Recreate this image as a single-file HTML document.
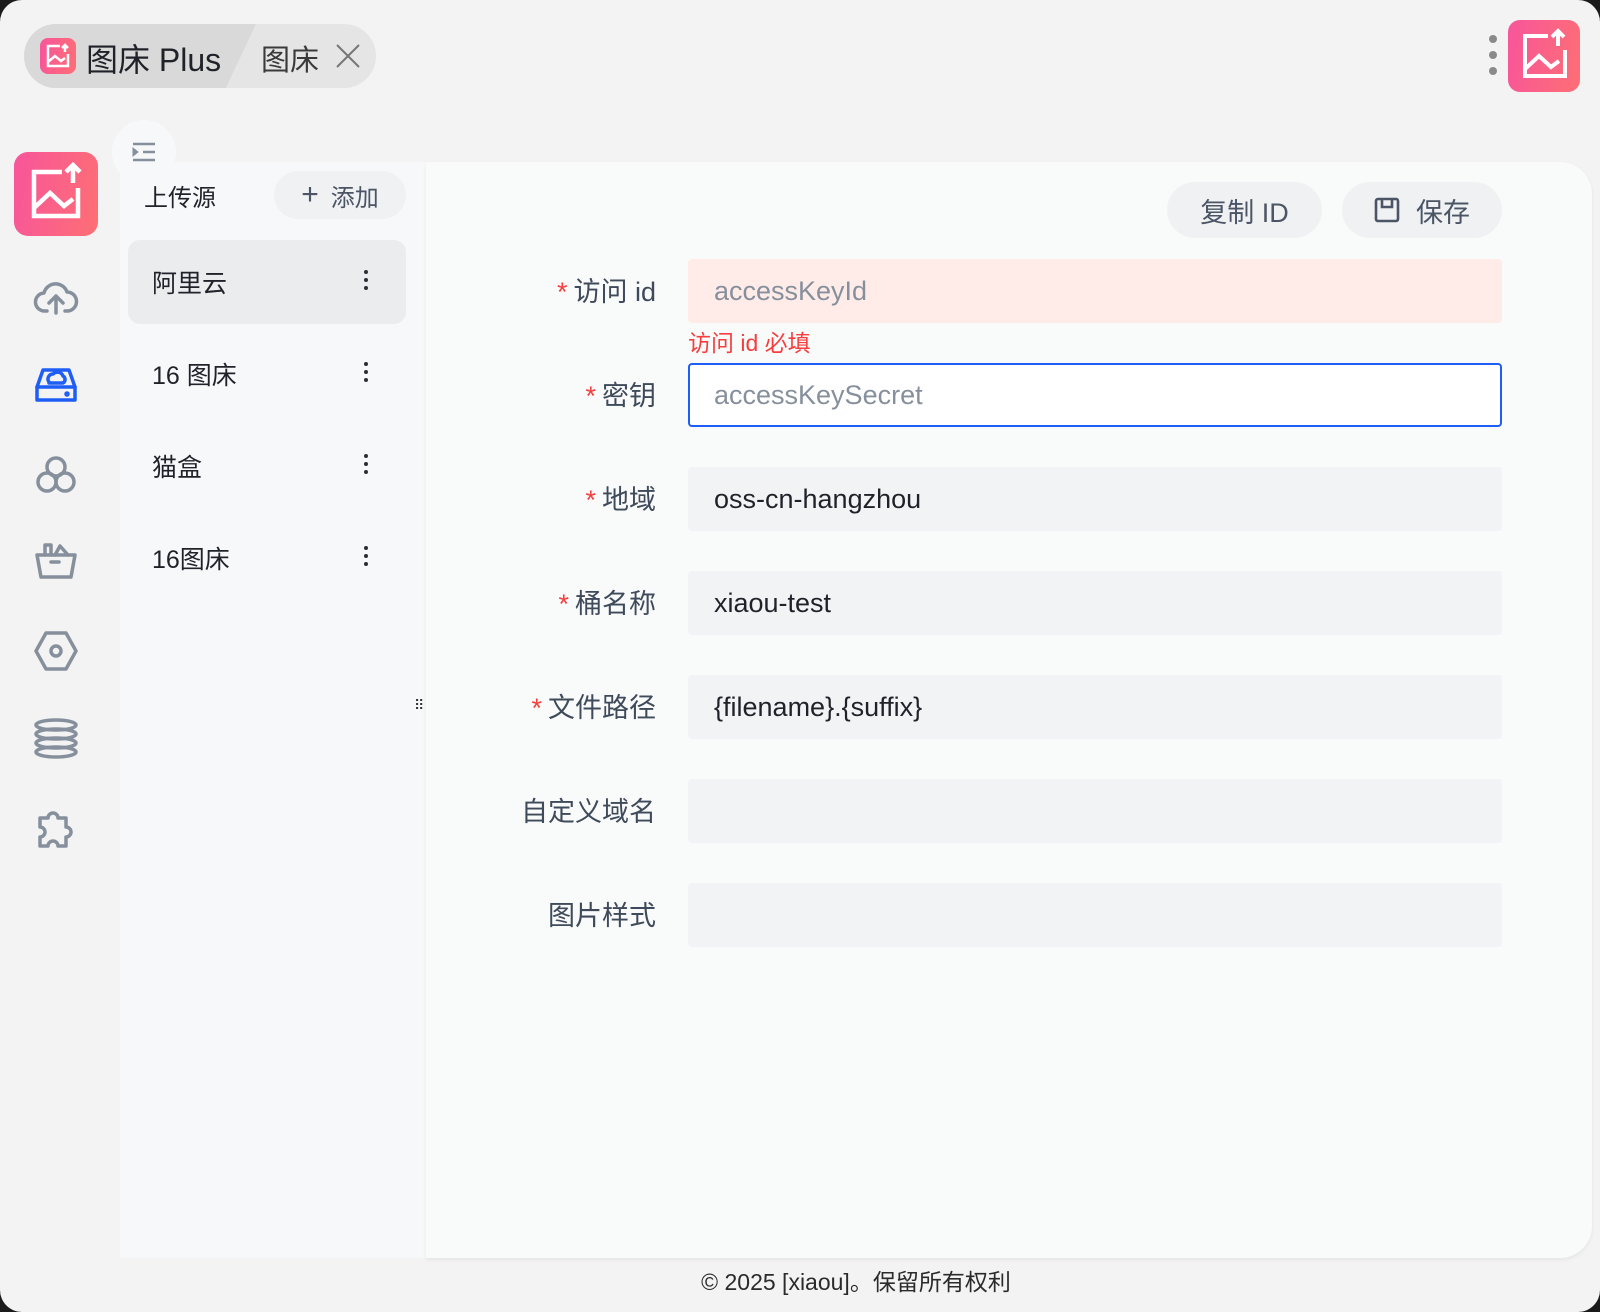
<!DOCTYPE html>
<html><head><meta charset="utf-8"><style>
*{box-sizing:border-box;margin:0;padding:0}
html,body{width:1600px;height:1312px;background:#1b1b1b;overflow:hidden}
body{font-family:"Liberation Sans","Noto Sans CJK SC",sans-serif;color:#1f2329}
.win{position:absolute;left:0;top:0;width:1600px;height:1312px;background:#f3f3f3;border-radius:22px;overflow:hidden}
.abs{position:absolute}
.tabs{left:24px;top:24px;width:352px;height:64px;border-radius:32px;background:#e5e5e5;overflow:hidden}
.tab1{left:0;top:0;width:232px;height:64px;background:#d9d9d9;clip-path:polygon(0 0,100% 0,87% 100%,0 100%)}
.logo{background:linear-gradient(100deg,#f7559b,#fe6f74);border-radius:8px}
.side{left:120px;top:162px;width:306px;height:1096px;background:#f7f8fa}
.card{left:426px;top:162px;width:1166px;height:1096px;background:#f9fafa;border-radius:0 32px 32px 0;box-shadow:0 2px 4px rgba(0,0,0,.06)}
.btn{height:56px;border-radius:28px;background:#eff1f3;color:#4b5565;font-size:27px;display:flex;align-items:center;justify-content:center}
.lbl{width:260px;text-align:right;font-size:27px;color:#3f4a5a;left:396px}
.lbl b{color:#f53f3f;font-weight:normal;margin-right:6px}
.inp{left:688px;width:814px;height:64px;border-radius:4px;background:#f2f3f5;font-size:27px;padding-left:26px;display:flex;align-items:center;color:#1f2329}
.item{left:128px;width:278px;height:84px;border-radius:12px;font-size:25px;padding-left:24px;display:flex;align-items:center;color:#1f2329}
.dots{position:absolute;right:38px;top:30px;width:4px}
.dots i{display:block;width:4px;height:4px;border-radius:2px;background:#2b2f36;margin-bottom:4px}
.nav svg{position:absolute;left:33px;width:46px;height:46px;fill:none;stroke:#86909c;stroke-width:3.5;stroke-linecap:round;stroke-linejoin:round}
</style></head><body><div class="win">
<div class="abs tabs"><div class="abs tab1"></div>
 <div class="abs logo" style="left:16px;top:14px;width:36px;height:36px"><svg width="36" height="36" viewBox="0 0 36 36" fill="none" stroke="#fff" stroke-width="2.5"><path d="M20 8H8v20h20V16"/><path d="M8 24l7-6 6 5 4-3"/><path d="M25 14V7M22 10l3-3 3 3"/></svg></div>
 <div class="abs" style="left:62px;top:11px;font-size:32px;color:#1f2329">图床 Plus</div>
 <div class="abs" style="left:237px;top:13px;font-size:29px;color:#3a3a3a">图床</div>
 <svg class="abs" style="left:310px;top:18px" width="28" height="28" viewBox="0 0 28 28" stroke="#777" stroke-width="2"><path d="M3 3l22 22M25 3L3 25"/></svg>
</div>
<div class="abs" style="left:1489px;top:35px;width:9px"><i style="display:block;width:8px;height:8px;border-radius:4px;background:#8a8a8a;margin-bottom:8px"></i><i style="display:block;width:8px;height:8px;border-radius:4px;background:#8a8a8a;margin-bottom:8px"></i><i style="display:block;width:8px;height:8px;border-radius:4px;background:#8a8a8a"></i></div>
<div class="abs logo" style="left:1508px;top:20px;width:72px;height:72px;border-radius:12px"><svg width="72" height="72" viewBox="0 0 72 72" fill="none" stroke="#fff" stroke-width="4"><path d="M40 16H17v40h40V30"/><path d="M17 49l14-13 12 11 8-6"/><path d="M50 26V11M44 17l6-6 6 6"/></svg></div>

<div class="abs side"></div>
<div class="abs card"></div>
<div class="abs logo" style="left:14px;top:152px;width:84px;height:84px;border-radius:14px"><svg width="84" height="84" viewBox="0 0 84 84" fill="none" stroke="#fff" stroke-width="4.5"><path d="M48 20H20v44h44V36"/><path d="M20 56l16-15 14 13 9-7"/><path d="M59 31V13M52 20l7-7 7 7"/></svg></div>
<div class="abs" style="left:112px;top:120px;width:64px;height:64px;border-radius:32px;background:#f7f8f9"></div>
<svg class="abs" style="left:132px;top:142px" width="24" height="20" viewBox="0 0 24 20" stroke="#86909c" stroke-width="2.4"><path d="M1 2h22M11 10h12M1 18h22"/><path d="M1 6l5 4-5 4z" fill="#86909c" stroke-width="1"/></svg>

<div class="nav">
<svg style="top:275px" viewBox="0 0 46 46"><path d="M14 36H12a9 9 0 0 1-1-18 12 12 0 0 1 23-1 9 9 0 0 1 0 19h-2"/><path d="M23 38V22M16 28l7-7 7 7"/></svg>
<svg style="top:362px;stroke:#1f5ef6" viewBox="0 0 46 46"><path d="M4 25l6-17h26l6 17v13H4z"/><path d="M4 25h38"/><path d="M16 20a5 5 0 0 1 4-8 6 6 0 0 1 10 2 4 4 0 0 1 0 7H16"/><circle cx="34" cy="32" r="1" fill="#1f5ef6"/></svg>
<svg style="top:452px" viewBox="0 0 46 46"><circle cx="23" cy="15" r="9"/><circle cx="14" cy="30" r="9"/><circle cx="32" cy="30" r="9"/></svg>
<svg style="top:540px" viewBox="0 0 46 46"><path d="M4 15h38l-4 22H8z"/><path d="M12 15V5h6v10M22 15l5-9 8 9"/><path d="M18 22h8"/></svg>
<svg style="top:628px" viewBox="0 0 46 46"><path d="M13 5h20l10 18-10 18H13L3 23z"/><circle cx="23" cy="23" r="5"/></svg>
<svg style="top:716px" viewBox="0 0 46 46"><ellipse cx="23" cy="9" rx="20" ry="5"/><ellipse cx="23" cy="18" rx="20" ry="5"/><ellipse cx="23" cy="27" rx="20" ry="5"/><ellipse cx="23" cy="36" rx="20" ry="5"/></svg>
<svg style="top:804px" viewBox="0 0 46 46"><path d="M7 14h8a5 5 0 1 1 10 0h8v9a5 5 0 1 1 0 10v9h-8a5 5 0 1 0-10 0H7v-9a5 5 0 1 0 0-10z"/></svg>
</div>

<div class="abs" style="left:144px;top:178px;font-size:24px;color:#1f2329">上传源</div>
<div class="abs btn" style="left:274px;top:171px;width:132px;height:48px;border-radius:24px;font-size:24px;background:#eff1f3"><span style="font-size:30px;margin-right:12px;font-weight:300">+</span>添加</div>
<div class="abs item" style="top:240px;background:#ebecee">阿里云<span class="dots"><i></i><i></i><i></i></span></div>
<div class="abs item" style="top:332px">16 图床<span class="dots"><i></i><i></i><i></i></span></div>
<div class="abs item" style="top:424px">猫盒<span class="dots"><i></i><i></i><i></i></span></div>
<div class="abs item" style="top:516px">16图床<span class="dots"><i></i><i></i><i></i></span></div>
<div class="abs" style="left:414px;top:702px;font-size:14px;color:#333;line-height:6px;letter-spacing:1px">⠿</div>

<div class="abs btn" style="left:1167px;top:182px;width:155px">复制 ID</div>
<div class="abs btn" style="left:1342px;top:182px;width:160px"><svg width="26" height="26" viewBox="0 0 26 26" fill="none" stroke="#4b5565" stroke-width="2.6" style="margin-right:16px"><rect x="2" y="2" width="22" height="22" rx="2"/><path d="M8 2v8h10V2"/></svg>保存</div>

<div class="abs lbl" style="top:270px"><b>*</b>访问 id</div>
<div class="abs inp" style="top:259px;background:#ffece8;color:#86909c">accessKeyId</div>
<div class="abs" style="left:688px;top:324px;font-size:23px;color:#f53f3f">访问 id 必填</div>
<div class="abs lbl" style="top:374px"><b>*</b>密钥</div>
<div class="abs inp" style="top:363px;background:#fff;border:2px solid #1f5ef6;color:#86909c;padding-left:24px">accessKeySecret</div>
<div class="abs lbl" style="top:478px"><b>*</b>地域</div>
<div class="abs inp" style="top:467px">oss-cn-hangzhou</div>
<div class="abs lbl" style="top:582px"><b>*</b>桶名称</div>
<div class="abs inp" style="top:571px">xiaou-test</div>
<div class="abs lbl" style="top:686px"><b>*</b>文件路径</div>
<div class="abs inp" style="top:675px">{filename}.{suffix}</div>
<div class="abs lbl" style="top:790px">自定义域名</div>
<div class="abs inp" style="top:779px"></div>
<div class="abs lbl" style="top:894px">图片样式</div>
<div class="abs inp" style="top:883px"></div>

<div class="abs" style="left:0;width:1712px;top:1263px;text-align:center;font-size:23px;color:#2b2b2b">© 2025 [xiaou]。保留所有权利</div>
</div></body></html>
